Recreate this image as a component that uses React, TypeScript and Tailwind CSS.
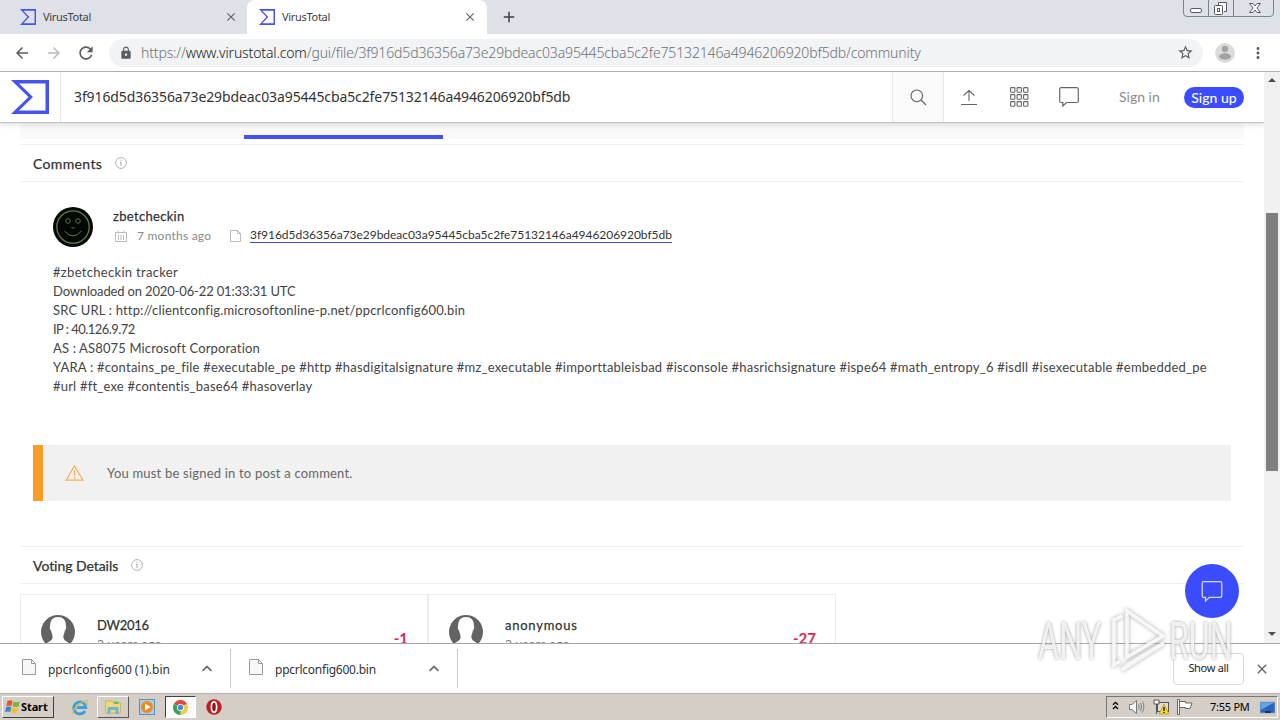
import React from "react";
import { MdAdd, MdArrowBack, MdArrowForward, MdClose, MdLock, MdMoreVert, MdRefresh, MdStarBorder } from "react-icons/md";

const HASH = "3f916d5d36356a73e29bdeac03a95445cba5c2fe75132146a4946206920bf5db";

const COMMENT = [
  { text: "#zbetcheckin tracker", cls: "tracking-[0.31px]" },
  { text: "Downloaded on 2020-06-22 01:33:31 UTC", cls: "tracking-[-0.15px]" },
  { text: "SRC URL : http://clientconfig.microsoftonline-p.net/ppcrlconfig600.bin", cls: "tracking-[0.165px]" },
  { text: "IP : 40.126.9.72", cls: "tracking-[-0.55px]" },
  { text: "AS : AS8075 Microsoft Corporation", cls: "tracking-[0.15px]" },
  {
    text: "YARA : #contains_pe_file #executable_pe #http #hasdigitalsignature #mz_executable #importtableisbad #isconsole #hasrichsignature #ispe64 #math_entropy_6 #isdll #isexecutable #embedded_pe",
    cls: "tracking-[0.22px]",
  },
  { text: "#url #ft_exe #contentis_base64 #hasoverlay", cls: "tracking-[0.2px]" },
];

function Sigma({ className }: { className: string }) {
  return (
    <svg viewBox="0 0 38 34" className={className} preserveAspectRatio="none">
      <path d="M0 0H38V34H0L17.5 17ZM8 3.5L22 17L8 30.5H34.5V3.5Z" fill="#4654ee" fillRule="evenodd" />
    </svg>
  );
}

function Tab({ active }: { active?: boolean }) {
  return (
    <div
      className={
        active
          ? "flex h-[34px] w-[240px] items-center rounded-t-lg bg-white pl-3 pr-[10px]"
          : "flex h-[34px] w-[247px] items-center pl-5 pr-[9px]"
      }
    >
      <Sigma className="h-4 w-4" />
      <span className="ml-[7px] flex-1 font-['Noto_Sans'] text-[11px] tracking-[-0.3px] text-[#3c4043]">VirusTotal</span>
      <MdClose className="h-[14px] w-[14px] text-[#5f6368]" />
    </div>
  );
}

function WindowButtons() {
  return (
    <svg className="absolute right-[4px] top-0 h-[17px] w-[94px]" viewBox="0 0 94 17" fill="none" stroke="#7d838d">
      <path d="M1.500 0V13Q1.500 16.500 5 16.500H88Q91.500 16.500 91.500 13V0M26.500 0V16.500M51.500 0V16.500" />
      <g stroke="#555b66" transform="translate(1 0)">
        <rect x="7.500" y="8.500" width="11" height="4" rx="1.500" fill="#fff" />
        <path d="M35.500 5V2.500H43.500V11.500H41" fill="#fff" />
        <rect x="31.500" y="5.500" width="8" height="9" rx="1" fill="#fff" />
        <rect x="34.500" y="8.500" width="2" height="3" />
        <path d="M66.500 3.500H70L72 6L74 3.500H77.500L74 8L77.500 12.500H74L72 10L70 12.500H66.500L70 8Z" fill="#fff" />
      </g>
    </svg>
  );
}

function InfoIcon() {
  return (
    <svg className="h-3 w-3" viewBox="0 0 12 12" fill="none" stroke="#aaa">
      <circle cx="6" cy="6" r="5.400" strokeWidth=".9" />
      <path d="M6 5V9M5 5.400H6M6 2.700V3.900" />
    </svg>
  );
}

function Bubble({ className }: { className: string }) {
  return (
    <svg className={className} viewBox="0 0 20 20" fill="none" stroke="currentColor" strokeWidth="1.200">
      <path d="M2.200.700H17.800Q19.300.700 19.300 2.200V14Q19.300 15.500 17.800 15.500H7.500L3.800 19V15.500H2.200Q.700 15.500.700 14V2.200Q.700.700 2.200.700Z" />
    </svg>
  );
}

function SectionTitle({ children }: { children: React.ReactNode }) {
  return (
    <div className="mx-5 flex h-[38px] shrink-0 items-center gap-[13px] border-y border-[#efefef] pl-[13px] text-[14px] text-[#333]">
      {children}
      <InfoIcon />
    </div>
  );
}

function SmileyAvatar() {
  return (
    <svg className="h-10 w-10" viewBox="0 0 40 40" fill="none" stroke="#5b8040">
      <circle cx="20" cy="20" r="20" fill="#050704" stroke="none" />
      <circle cx="20" cy="20" r="16.200" strokeWidth="1.300" />
      <circle cx="15" cy="14" r="2.300" strokeWidth=".9" />
      <circle cx="25" cy="14" r="2.300" strokeWidth=".9" />
      <path d="M18.500 20L20 21.500L21.500 20M11.500 24Q20 34 28.500 24" />
    </svg>
  );
}

function VoteCard({ name, nameCls, score }: { name: string; nameCls: string; score: string }) {
  return (
    <div className="flex h-20 w-[408px] border border-[#ececec] pl-5 pr-[19px] pt-5">
      <svg className="h-[34px] w-[34px]" viewBox="0 0 34 34">
        <circle cx="17" cy="17" r="17" fill="#636363" />
        <path d="M17 2Q9 2 9 11C8.500 12.500 9 15 10.300 16C10.500 19 12 20 11.500 23C11 26 8 26 5 29Q17 38 29 29C26 26 23 26 22.500 23C22 20 23.500 19 23.700 16C25 15 25.500 12.500 25 11Q25 2 17 2Z" fill="#fff" />
      </svg>
      <div className="ml-[22px] flex-1 pt-px leading-[19px]">
        <div className={nameCls}>{name}</div>
        <div className="-mt-px text-[12px] tracking-[0.5px] text-[#777]">2 years ago</div>
      </div>
      <div className="pt-[12px] text-[15px] font-bold text-[#e02455]">{score}</div>
    </div>
  );
}

function FileIcon({ className }: { className: string }) {
  return (
    <svg className={className} viewBox="0 0 14 16" fill="#f7f7f7" stroke="#9a9a9a">
      <path d="M.500.500H9.500L13.500 4.500V15.500H.500ZM9.500.500V4.500H13.500" />
    </svg>
  );
}

function Download({ name, cls, nameCls }: { name: string; cls: string; nameCls: string }) {
  return (
    <div className={`${cls} flex h-[39px] items-center border-r border-[#ccc] pr-[17px]`}>
      <FileIcon className="-mt-1 h-4 w-[14px]" />
      <span className={nameCls}>{name}</span>
      <svg className="h-[7px] w-3" viewBox="0 0 12 7" fill="none" stroke="#707070" strokeWidth="1.800">
        <path d="M1.500 5.800L6 1.500L10.500 5.800" />
      </svg>
    </div>
  );
}

function Taskbar() {
  return (
    <div className="flex h-[26px] items-center bg-[#d5cec6] pl-[2px] pr-[2px] font-['Noto_Sans'] text-black">
      <div className="flex h-[22px] w-[52px] items-center border border-b-[#404040] border-l-white border-r-[#404040] border-t-white pl-[2px] text-[11px] font-bold tracking-[-0.1px]">
        <svg className="h-4 w-4 shrink-0" viewBox="0 0 16 16">
          <path d="M2.500 2Q5.500.500 7.500 2L6.500 7Q4 6 1.300 7.200Z" fill="#e8532a" />
          <path d="M8.500 2.500Q11 4 15 2.500L13.500 7.500Q10.500 8.800 7.600 7.300Z" fill="#7cb63c" />
          <path d="M1 8.300Q4 7 6.300 8.200L5.200 13Q2.500 12 0 13.300Z" fill="#3c83cf" />
          <path d="M7.300 8.500Q10 10 13.300 8.700L12 13.500Q9 15 6.200 13.400Z" fill="#f5bd2c" />
        </svg>
        Start
      </div>
      <svg className="ml-[17px] h-[17px] w-[18px]" viewBox="0 0 18 17" fill="none">
        <path d="M14 12A6 6 0 1 1 14.800 8.500H5.500" stroke="#38a0dc" strokeWidth="2.800" />
        <path d="M2 15C0 11 13 0 16.500 2Q17.500 3 15.500 6" stroke="#e4b844" strokeWidth="1.300" />
      </svg>
      <div className="ml-2 flex h-[22px] w-8 items-center justify-center border border-b-[#555] border-l-white border-r-[#555] border-t-white">
        <svg className="h-4 w-4" viewBox="0 0 16 16">
          <path d="M.500 2H7L8.500 4H15.500V14H.500Z" fill="#f3d777" stroke="#c9a848" strokeWidth=".7" />
          <path d="M9 2.500H13.500V5H9Z" fill="#74b85a" />
          <path d="M2.500 15V9Q2.500 8 3.500 8H12.500Q13.500 8 13.500 9V15H10.500V11H5.500V15Z" fill="#6ab7dc" />
        </svg>
      </div>
      <svg className="ml-[10px] h-4 w-4" viewBox="0 0 16 16">
        <rect x=".500" y=".500" width="15" height="15" fill="#a9cdea" stroke="#5c8fbb" />
        <circle cx="8" cy="8" r="6" fill="#f08a1c" />
        <path d="M6 4.500L11.500 8L6 11.500Z" fill="#fff" />
      </svg>
      <div className="ml-[10px] flex h-[22px] w-[31px] items-center justify-center border border-b-white border-l-[#404040] border-r-white border-t-[#404040] bg-[#fafafa]">
        <svg className="h-[15px] w-[15px]" viewBox="0 0 16 16">
          <path d="M8 8L1.070 4A8 8 0 0 1 14.930 4Z" fill="#df4a3c" />
          <path d="M8 8L14.930 4A8 8 0 0 1 8 16Z" fill="#f8cd3c" />
          <path d="M8 8V16A8 8 0 0 1 1.070 4Z" fill="#39a257" />
          <circle cx="8" cy="8" r="3.800" fill="#fff" />
          <circle cx="8" cy="8" r="2.900" fill="#4688e8" />
        </svg>
      </div>
      <svg className="ml-[10px] h-4 w-4" viewBox="0 0 16 16">
        <circle cx="8" cy="8" r="7.700" fill="#bd1f22" />
        <ellipse cx="8" cy="8" rx="2.600" ry="5.200" fill="#8d1013" stroke="#fff" strokeWidth="1.700" />
      </svg>
      <div className="ml-auto flex h-[22px] w-[172px] items-center border border-b-white border-l-[#777] border-r-white border-t-[#777] pl-[5px]">
        <svg className="-mt-1 h-[9px] w-[7px]" viewBox="0 0 7 9" fill="none" stroke="#000" strokeWidth="1.300">
          <path d="M1 3.800L3.500 1.300L6 3.800M1 8L3.500 5.500L6 8" />
        </svg>
        <svg className="ml-[10px] h-4 w-4" viewBox="0 0 16 16" fill="none" stroke="#777">
          <path d="M.500 5.500H3L7.500 1.500V14.500L3 10.500H.500Z" fill="#fff" />
          <path d="M9.500 5.500Q11 8 9.500 10.500M11.500 4Q13.800 8 11.500 12M13.300 2.500Q16.500 8 13.300 13.500" strokeWidth=".9" />
        </svg>
        <svg className="ml-2 h-4 w-4" viewBox="0 0 16 16">
          <rect x="4.500" y="3.500" width="11" height="9" fill="#ddd" stroke="#555" />
          <path d="M1 1H6V5H1ZM3.500 5V15" fill="#fff" stroke="#555" />
          <path d="M11 5L16 15H6Z" fill="#f6d52d" stroke="#b99819" strokeWidth=".7" />
          <path d="M11 8V12M11 13V14" stroke="#222" strokeWidth="1.400" />
        </svg>
        <svg className="ml-2 h-4 w-4" viewBox="0 0 16 16" fill="#fff" stroke="#666">
          <path d="M2.500 2.500H8.500V4H15L13 9.500H8.500V8.500H2.500Z" />
          <path d="M.500.500H2.500V15.500H.500Z" />
        </svg>
        <span className="ml-[17px] w-[39px] whitespace-nowrap text-[11px] tracking-[-0.25px]">7:55 PM</span>
        <svg className="ml-[11px] h-[13px] w-[15px]" viewBox="0 0 15 13">
          <path d="M0 1H15V12H0Z" fill="#2a64b4" stroke="#8da9cb" strokeWidth=".8" />
          <path d="M.500 1.500H14.500L.500 9Z" fill="#67a5e0" />
          <path d="M5 10H11V12H5Z" fill="#123765" />
        </svg>
      </div>
    </div>
  );
}

function Watermark() {
  return (
    <div className="pointer-events-none absolute left-[1038px] top-[607px] flex h-[68px] w-[200px] items-center font-['Roboto'] text-[51px] leading-none text-white/80 [text-shadow:0_0_4px_#999]">
      <span className="w-[70px] origin-left scale-x-[0.635]">ANY</span>
      <svg className="h-[68px] w-[60px] shrink-0 drop-shadow-[0_0_2px_#999]" viewBox="0 0 60 68" fill="none" stroke="#fff" strokeOpacity=".85" strokeWidth="3.500">
        <path d="M19 4L55 29L19 50ZM14 9L6 13V58L12 54M14 63L56 36L19 58Z" />
      </svg>
      <span className="ml-px w-[62px] origin-left scale-x-[0.63]">RUN</span>
    </div>
  );
}

export default function App() {
  return (
    <div className="relative flex h-[720px] w-[1280px] flex-col overflow-hidden bg-white font-['Lato',sans-serif]">
      {/* Tab strip */}
      <div className="relative flex h-[34px] shrink-0 bg-[#dee1e8]">
        <Tab />
        <Tab active />
        <MdAdd className="ml-[13px] mt-[8px] h-[18px] w-[18px] text-[#3c4043]" />
        <WindowButtons />
      </div>

      {/* Address bar */}
      <div className="flex h-[38px] shrink-0 items-center border-b border-[#b0b0b0] pl-[13px] pr-[13px] text-[#5a5d61]">
        <MdArrowBack className="h-[18px] w-[18px]" />
        <MdArrowForward className="ml-[14px] h-[18px] w-[18px] text-[#bbb]" />
        <MdRefresh className="ml-[13px] h-[20px] w-[20px]" />
        <div className="ml-[13px] flex h-7 w-[1095px] items-center rounded-full bg-[#f1f3f5] pl-[10px] pr-[9px]">
          <MdLock className="h-[14px] w-[14px]" />
          <span className="ml-2 flex-1 whitespace-nowrap font-['Noto_Sans'] text-[14px] font-light tracking-[-0.14px] text-[#6d7175]">
            https://<span className="text-[#202124]">www.virustotal.com</span>/gui/file/{HASH}/community
          </span>
          <MdStarBorder className="h-[17px] w-[17px]" />
        </div>
        <svg className="ml-[12px] h-5 w-5" viewBox="0 0 20 20">
          <circle cx="10" cy="10" r="10" fill="#dcdcdc" />
          <circle cx="10" cy="6" r="3.200" fill="#a3a3a3" />
          <ellipse cx="10" cy="13.500" rx="6" ry="3.300" fill="#a3a3a3" />
        </svg>
        <MdMoreVert className="ml-[14px] h-[18px] w-[18px]" />
      </div>

      <div className="flex h-[571px] shrink-0">
        <div className="flex w-[1264px] flex-col overflow-hidden text-[#444]">
          {/* VirusTotal header */}
          <header className="z-10 flex h-[51px] shrink-0 items-center border-b border-[#c4c4c4] bg-white shadow-[0_2px_5px_rgba(0,0,0,0.12)]">
            <div className="flex h-full w-[61px] items-center border-r border-[#e3e3e3] pl-[11px]">
              <Sigma className="h-[34px] w-[38px]" />
            </div>
            <span className="flex-1 whitespace-nowrap pb-[2px] pl-[13px] font-['Noto_Sans'] text-[14px] tracking-[-0.1px] text-[#333]">{HASH}</span>
            <div className="flex h-full w-[52px] items-center justify-center border-x border-[#e6e6e6] bg-[#fafafa]">
              <svg className="h-[17px] w-[17px]" viewBox="0 0 17 17" fill="none" stroke="#666" strokeWidth="1.200">
                <circle cx="6.800" cy="6.800" r="5.800" />
                <path d="M11 11L16 16" />
              </svg>
            </div>
            <svg className="ml-[17px] h-[17px] w-4" viewBox="0 0 16 17" fill="none" stroke="#666" strokeWidth="1.100">
              <path d="M8 12V1.500M2.500 6.500L8 1.500L13.500 6.500M0 15.500H16" />
            </svg>
            <svg className="ml-[33px] h-5 w-[19px]" viewBox="0 0 19 20" fill="none" stroke="#666" strokeWidth="1.100">
              {[0.6, 7.600, 14.600].map((y) =>
                [0.6, 7.100, 13.600].map((x) => <rect key={`${x}-${y}`} x={x} y={y} width="4.300" height="4.600" rx=".8" />)
              )}
            </svg>
            <Bubble className="ml-[30px] h-5 w-5 text-[#666]" />
            <span className="ml-[40px] w-[42px] whitespace-nowrap pb-[2px] text-[14px] text-[#8a8a8a]">Sign in</span>
            <span className="ml-[23px] mr-5 flex h-[21px] w-[60px] items-center justify-center rounded-full bg-[#3b4bff] text-[14px] font-medium text-white">
              Sign up
            </span>
          </header>

          {/* Detail tabs, bottom edge only */}
          <div className="mx-5 h-[21px] shrink-0">
            <div className="flex h-4 items-end bg-[#f9f9f9] pl-[224px]">
              <div className="h-1 w-[199px] bg-[#4350f5]" />
            </div>
          </div>

          <SectionTitle>
            <span className="w-[69px] whitespace-nowrap tracking-[0.35px] [-webkit-text-stroke:0.25px]">Comments</span>
          </SectionTitle>

          <div className="shrink-0 px-[53px] pt-[25px]">
            <div className="flex gap-5">
              <SmileyAvatar />
              <div>
                <div className="text-[13px] leading-[19px] tracking-[0.32px] text-[#333] [-webkit-text-stroke:0.25px]">zbetcheckin</div>
                <div className="flex h-[19px] items-center text-[12px] text-[#888]">
                  <svg className="ml-[2px] h-3 w-3" viewBox="0 0 12 12" fill="none" stroke="#bbb">
                    <path d="M.500 2.500H11.500V11.500H.500ZM3 .500V3M9 .500V3M3.500 5V10M6 5V10M8.500 5V10" />
                  </svg>
                  <span className="ml-[10px] w-[75px] whitespace-nowrap tracking-[0.23px]">7 months ago</span>
                  <svg className="ml-[18px] h-3 w-[11px]" viewBox="0 0 11 12" fill="none" stroke="#bbb">
                    <path d="M.500.500H7.500L10.500 3.500V11.500H.500ZM7.500.500V3.500H10.500" />
                  </svg>
                  <span className="ml-[9px] whitespace-nowrap border-b border-[#3b4bff] text-[12px] leading-[14px] tracking-[-0.04px] text-[#333]">{HASH}</span>
                </div>
              </div>
            </div>
            <div className="mt-4 text-[13px] leading-[19px] text-[#444]">
              {COMMENT.map((line) => (
                <p key={line.text} className={`${line.cls} whitespace-nowrap`}>
                  {line.text}
                </p>
              ))}
            </div>
          </div>

          <div className="mx-[33px] mt-[49px] flex h-14 shrink-0 items-center border-l-[10px] border-[#fb9b28] bg-[#f1f1f1] pl-[22px] text-[13px] text-[#666]">
            <svg className="h-4 w-[19px]" viewBox="0 0 19 16" fill="none" stroke="#f7ae58" strokeWidth="1.200">
              <path d="M9.500 1L18 15.200H1ZM9.500 5V11M9.500 12V13.500" />
            </svg>
            <span className="ml-[23px] pt-px tracking-[0.2px]">You must be signed in to post a comment.</span>
          </div>

          <div className="mt-[45px] shrink-0">
            <SectionTitle>
              <span className="w-[85px] whitespace-nowrap tracking-[-0.05px] [-webkit-text-stroke:0.25px]">Voting Details</span>
            </SectionTitle>
          </div>

          <div className="mx-5 mt-[10px] flex shrink-0">
            <VoteCard name="DW2016" nameCls="text-[13px] tracking-[-0.25px] text-[#333] [-webkit-text-stroke:0.25px]" score="-1" />
            <VoteCard name="anonymous" nameCls="text-[13px] tracking-[0.75px] text-[#333] [-webkit-text-stroke:0.25px]" score="-27" />
          </div>
        </div>

        {/* Scrollbar */}
        <div className="flex w-4 flex-col items-center bg-[#f1f1f1]">
          <div className="mt-[6px] h-0 w-0 border-x-4 border-b-4 border-x-transparent border-b-[#505050]" />
          <div className="mt-[131px] h-[258px] w-3 bg-[#7f7f7f]" />
          <div className="mb-[7px] mt-auto h-0 w-0 border-x-4 border-t-4 border-x-transparent border-t-[#505050]" />
        </div>
      </div>

      <div className="absolute left-[1185px] top-[564px] flex h-[54px] w-[54px] items-center justify-center rounded-full bg-[#3b4bff]">
        <Bubble className="h-[21px] w-[22px] text-white/80" />
      </div>

      {/* Download shelf */}
      <div className="flex h-[51px] shrink-0 items-center border-b border-t border-b-[#b5b3af] border-t-[#a8a8a8] bg-white">
        <Download
          name="ppcrlconfig600 (1).bin"
          cls="w-[231px] pl-[22px]"
          nameCls="ml-3 flex-1 whitespace-nowrap pt-[2px] font-['Noto_Sans'] text-[12px] tracking-[-0.03px] text-[#333]"
        />
        <Download
          name="ppcrlconfig600.bin"
          cls="w-[227px] pl-[18px]"
          nameCls="ml-3 flex-1 whitespace-nowrap pt-[2px] font-['Noto_Sans'] text-[12px] tracking-[-0.25px] text-[#333]"
        />
        <div className="ml-auto flex h-8 w-[71px] items-center justify-center rounded border border-[#d9d9d9] font-['Noto_Sans'] text-[11px] tracking-[-0.3px] text-[#222]">
          Show all
        </div>
        <MdClose className="ml-[10px] mr-[10px] h-4 w-4 text-[#666]" />
      </div>
      <Taskbar />
      <Watermark />
    </div>
  );
}
